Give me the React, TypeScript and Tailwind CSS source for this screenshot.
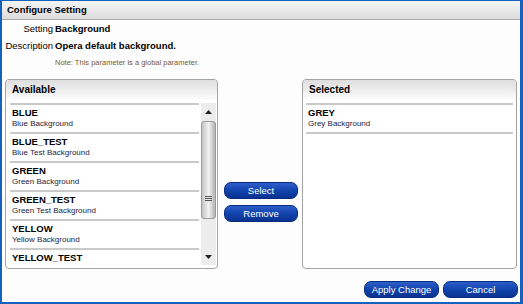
import React from 'react';

type Item = { name: string; desc: string };

const available: Item[] = [
  { name: 'BLUE', desc: 'Blue Background' },
  { name: 'BLUE_TEST', desc: 'Blue Test Background' },
  { name: 'GREEN', desc: 'Green Background' },
  { name: 'GREEN_TEST', desc: 'Green Test Background' },
  { name: 'YELLOW', desc: 'Yellow Background' },
  { name: 'YELLOW_TEST', desc: 'Yellow Test Background' },
];

const selected: Item[] = [{ name: 'GREY', desc: 'Grey Background' }];

const ListItem: React.FC<{ item: Item }> = ({ item }) => (
  <div className="border-t-2 border-[#c9c9c9] pl-[2px] pt-[2px] pb-[3px]">
    <div className="text-[9.5px] leading-[12px] font-bold text-black">{item.name}</div>
    <div className="text-[8px] leading-[10px] text-[#1c1c3a]">{item.desc}</div>
  </div>
);

const BlueButton: React.FC<{ label: string; className?: string }> = ({ label, className }) => (
  <button
    className={`h-[17px] rounded-[7px] border border-[#0a2c80] bg-linear-to-b from-[#2c5dc9] via-[#1244ad] to-[#083291] text-[9.5px] leading-[15px] text-white ${className ?? ''}`}
  >
    {label}
  </button>
);

const Arrow: React.FC<{ up?: boolean }> = ({ up }) => (
  <svg width="7" height="4" viewBox="0 0 7 4">
    {up ? <path d="M0 4 L3.5 0 L7 4 Z" fill="#222" /> : <path d="M0 0 L3.5 4 L7 0 Z" fill="#222" />}
  </svg>
);

const Scrollbar: React.FC = () => (
  <div className="flex w-[15px] flex-col bg-[#ececec]">
    <div className="flex h-[17px] items-center justify-center">
      <Arrow up />
    </div>
    <div className="relative flex-1">
      <div className="absolute left-0 top-[1px] h-[98px] w-[15px] rounded-[3px] border border-[#9a9a9a] bg-linear-to-r from-[#c4c4c4] via-[#f2f2f2] to-[#b4b4b4]">
        <div className="absolute left-[3px] top-[74px] flex w-[7px] flex-col gap-[1px]">
          <div className="h-px bg-[#555]" />
          <div className="h-px bg-[#555]" />
          <div className="h-px bg-[#555]" />
        </div>
      </div>
    </div>
    <div className="flex h-[17px] items-center justify-center">
      <Arrow />
    </div>
  </div>
);

const PanelHeader: React.FC<{ title: string }> = ({ title }) => (
  <div className="h-[19px] rounded-t-[4px] bg-linear-to-b from-[#dedede] to-[#fbfbfb] pl-[6px] text-[10px] font-bold leading-[19px] text-black">
    {title}
  </div>
);

const App: React.FC = () => {
  return (
    <div
      className="flex h-[304px] w-[523px] flex-col border-x-2 border-t border-b-2 border-[#1462bd] border-r-[3px] bg-[#fdfdfd] text-black"
      style={{ fontFamily: '"Liberation Sans", Arial, sans-serif' }}
    >
      <div className="h-[19px] border-b border-[#a9a9a9] bg-linear-to-b from-[#f6f6f6] to-[#dcdcdc] pl-[5px] text-[9.5px] font-bold leading-[18px]">
        Configure Setting
      </div>

      <div className="mt-[2px] flex h-[14px] items-center gap-[2px] text-[9.5px]">
        <div className="w-[51px] text-right">Setting</div>
        <div className="font-bold">Background</div>
      </div>
      <div className="mt-[3px] flex h-[14px] items-center gap-[2px] text-[9.5px]">
        <div className="w-[51px] text-right">Description</div>
        <div className="font-bold">Opera default background.</div>
      </div>
      <div className="mt-[5px] h-[10px] pl-[53px] text-[7.5px] leading-[10px] text-[#7a5a32]">
        Note: This parameter is a global parameter.
      </div>

      <div className="mt-[11px] flex h-[190px] pl-[3px]">
        <div className="flex w-[213px] flex-col rounded-[4px] border border-[#a4a4a4] bg-white">
          <PanelHeader title="Available" />
          <div className="mt-[4px] flex h-[162px] pl-[4px] pr-[1px]">
            <div className="mr-[2px] flex-1 overflow-hidden">
              {available.map((it) => (
                <ListItem key={it.name} item={it} />
              ))}
            </div>
            <Scrollbar />
          </div>
        </div>

        <div className="flex w-[84px] flex-col gap-[6px] pl-[6px] pt-[103px]">
          <BlueButton label="Select" className="w-[74px]" />
          <BlueButton label="Remove" className="w-[74px]" />
        </div>

        <div className="flex w-[215px] flex-col rounded-[4px] border border-[#a4a4a4] bg-white">
          <PanelHeader title="Selected" />
          <div className="mx-[3px] mt-[4px] border-b-2 border-[#c9c9c9]">
            {selected.map((it) => (
              <ListItem key={it.name} item={it} />
            ))}
          </div>
        </div>
      </div>

      <div className="mt-[12px] flex justify-end gap-[4px] pr-[2px]">
        <BlueButton label="Apply Change" className="w-[75px]" />
        <BlueButton label="Cancel" className="w-[75px]" />
      </div>
    </div>
  );
};

export default App;
